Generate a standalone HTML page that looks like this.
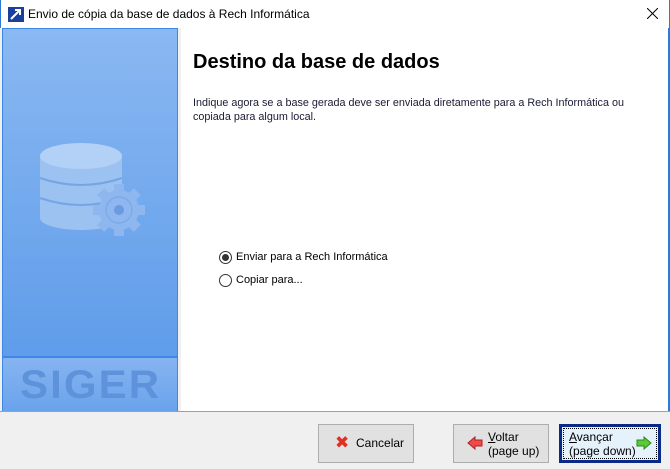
<!DOCTYPE html>
<html><head><meta charset="utf-8"><style>
*{margin:0;padding:0;box-sizing:border-box}
body{width:670px;height:469px;overflow:hidden;background:#f0f0f0;font-family:"Liberation Sans","DejaVu Sans",sans-serif;font-size:11px;position:relative;color:#000}
.title{position:absolute;left:0;top:0;width:670px;height:28px;background:#fff;border-left:1px solid #2b7bd6;border-right:1px solid #2b7bd6}
.title span{position:absolute;left:27px;top:7px;font-size:12px}
.content{position:absolute;left:181px;top:28px;width:487px;height:384px;background:#fff}
.left{position:absolute;left:2px;top:28px;width:176px;height:384px;border:1px solid #3d87e6;background:linear-gradient(#8ab8f2,#5d9be9 90%)}
.bottom{position:absolute;left:0;top:411px;width:670px;height:58px;background:#f0f0f0;border-top:1px solid #a0a0a0}
.btn{position:absolute;top:424px;height:39px;background:#e1e1e1;border:1px solid #adadad;font-size:12px}
.radio{position:absolute;width:13px;height:13px;border:1px solid #333;border-radius:50%;background:#fff}
</style></head><body>
<div class="title">
<svg style="position:absolute;left:7px;top:7px" width="16" height="15"><rect width="16" height="15" fill="#1a3f9e"/><path d="M3 12 L12 3 M7 3 H12 V8" stroke="#fff" stroke-width="2" fill="none"/></svg>
<span>Envio de cópia da base de dados à Rech Informática</span>
<svg style="position:absolute;left:646px;top:8px" width="11" height="11"><path d="M0 0L11 11M11 0L0 11" stroke="#000" stroke-width="1"/></svg>
</div>
<div class="left">
<svg style="position:absolute;left:36px;top:113px" width="112" height="100">
<ellipse cx="42" cy="76" rx="41" ry="12" fill="#9cc2f2"/>
<rect x="1" y="14" width="82" height="62" fill="#9cc2f2"/>
<path d="M1 36 Q42 50 83 36 M1 56 Q42 70 83 56" stroke="#75a5e4" stroke-width="2" fill="none"/>
<ellipse cx="42" cy="14" rx="41" ry="13" fill="#b3d0f6"/>
<circle cx="80" cy="68" r="20" fill="#8eb7ef"/>
<g fill="#8eb7ef"><rect x="75" y="42" width="10" height="52"/><rect x="54" y="63" width="52" height="10"/><rect x="75" y="42" width="10" height="52" transform="rotate(45 80 68)"/><rect x="75" y="42" width="10" height="52" transform="rotate(-45 80 68)"/></g>
<circle cx="80" cy="68" r="13" fill="none" stroke="#7eaae8" stroke-width="1.5"/>
<circle cx="80" cy="68" r="5" fill="#6a9be0"/>
</svg>
<div style="position:absolute;left:0;top:327px;width:174px;height:2px;background:#3d87e6"></div>
<div style="position:absolute;left:0;top:329px;width:174px;height:53px;background:linear-gradient(#86b4f0,#6aa3ec)"></div>
<div style="position:absolute;left:17px;top:334px;font-size:40px;font-weight:bold;color:#5e93dc;letter-spacing:2px;transform:scaleX(1.05);transform-origin:left">SIGER</div>
</div>
<div style="position:absolute;left:178px;top:28px;width:3px;height:384px;background:#f0f0f0"></div>
<div class="content">
<div style="position:absolute;left:12px;top:23px;font-size:20px;font-weight:bold">Destino da base de dados</div>
<div style="position:absolute;left:12px;top:68px;line-height:14px;color:#1a1a33;font-size:10.8px">Indique agora se a base gerada deve ser enviada diretamente para a Rech Informática ou<br>copiada para algum local.</div>
</div>
<div style="position:absolute;left:668px;top:28px;width:2px;height:441px;background:#2b7bd6"></div>
<div class="radio" style="left:219px;top:251px"><div style="position:absolute;left:2px;top:2px;width:7px;height:7px;border-radius:50%;background:#333"></div></div>
<div style="position:absolute;left:236px;top:251px">Enviar para a Rech Informática</div>
<div class="radio" style="left:219px;top:274px"></div>
<div style="position:absolute;left:236px;top:274px">Copiar para...</div>
<div class="bottom"></div>
<div class="btn" style="left:318px;width:96px">
<span style="position:absolute;left:16px;top:10px;color:#e03020;font-size:17px;font-weight:bold;line-height:16px">✖</span>
<span style="position:absolute;left:37px;top:11px">Cancelar</span></div>
<div class="btn" style="left:453px;width:96px">
<svg style="position:absolute;left:13px;top:11px" width="16" height="14"><path d="M1 7L8 1V4H15V10H8V13Z" fill="#ef4a4a" stroke="#b02020"/></svg>
<span style="position:absolute;left:34px;top:5px;line-height:14px"><u>V</u>oltar<br>(page up)</span></div>
<div class="btn" style="left:559px;width:102px;background:#e5f1fb;border:3px solid #0a2a88">
<div style="position:absolute;inset:1px;border:1px dotted #000"></div>
<svg style="position:absolute;left:74px;top:9px" width="16" height="14"><path d="M15 7L8 1V4H1V10H8V13Z" fill="#5cc83a" stroke="#2a8a1a"/></svg>
<span style="position:absolute;left:7px;top:3px;line-height:14px"><u>A</u>vançar<br>(page down)</span></div>
</body></html>
